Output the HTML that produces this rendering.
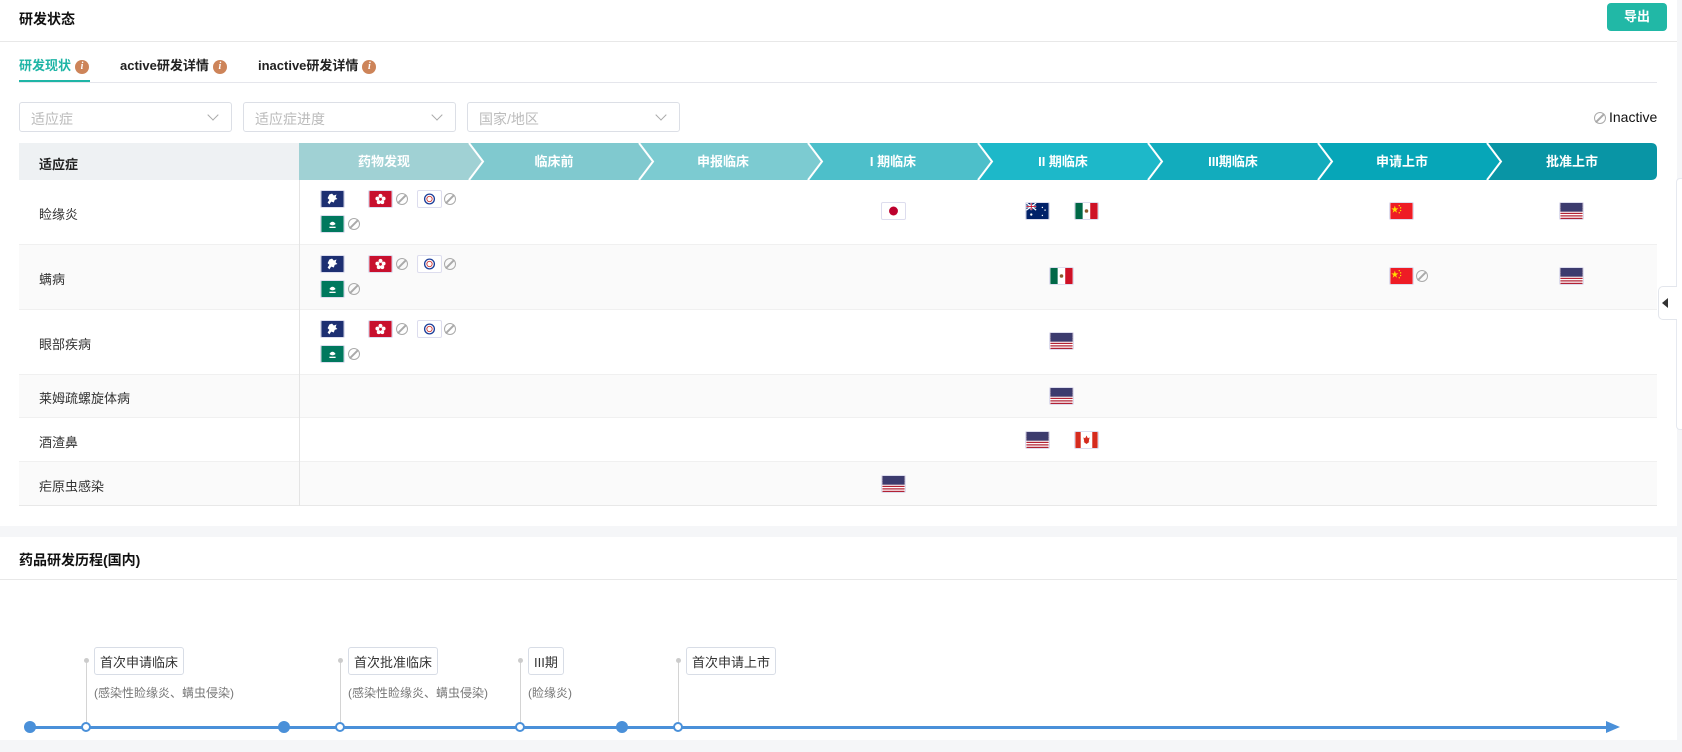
<!DOCTYPE html>
<html><head><meta charset="utf-8"><style>
*{margin:0;padding:0;box-sizing:border-box}
body{width:1682px;height:752px;overflow:hidden;background:#f5f6f8;font-family:"Liberation Sans","Noto Sans CJK SC",sans-serif;color:#222;position:relative}
.abs{position:absolute}
.card1{left:0;top:0;width:1677px;height:526px;background:#fff}
.card2{left:0;top:537px;width:1677px;height:203px;background:#fff}
.t{font-size:14px;font-weight:bold;color:#111}
.sel{height:30px;border:1px solid #dcdfe6;border-radius:3px;background:#fff;font-size:14px;color:#bbb;padding:6px 11px}
.sel:after{content:"";position:absolute;right:14px;top:8px;width:7px;height:7px;border-right:1px solid #aaa;border-bottom:1px solid #aaa;transform:rotate(45deg)}
.info{display:inline-block;width:14px;height:14px;border-radius:50%;background:#cd8459;color:#fff;font-size:10px;line-height:14px;text-align:center;font-weight:bold;vertical-align:1px;margin-left:4px;font-family:"Liberation Serif",serif;font-style:italic}
.row{left:19px;width:1638px;border-bottom:1px solid #f0f0f0}
.rl{font-size:13px;color:#333;left:20px}
.fl{position:absolute;width:25px;height:18px;border:1px solid #dde;border-radius:2px;overflow:hidden}
.no{position:absolute;width:12px;height:12px;border:1.5px solid #aaa;border-radius:50%}
.no:after{content:"";position:absolute;left:4px;top:-1px;width:1.5px;height:12px;background:#aaa;transform:rotate(45deg)}
.box{position:absolute;top:647px;height:28px;border:1px solid #d8dde6;border-radius:3px;background:#fff;font-size:13px;color:#333;padding:4px 5px;white-space:nowrap}
.sub{position:absolute;top:684px;font-size:12px;color:#777}
.vl{position:absolute;width:1px;background:#d4d4d4;top:660px;height:67px}
.vl:before{content:"";position:absolute;left:-2px;top:-2px;width:5px;height:5px;border-radius:50%;background:#ccc}
.fd{position:absolute;top:721px;width:12px;height:12px;border-radius:50%;background:#4a90d9}
.hd{position:absolute;top:722px;width:10px;height:10px;border-radius:50%;background:#fff;border:2px solid #4a90d9}
</style></head><body>
<div class="abs card1"></div>
<div class="abs card2"></div>
<div class="abs t" style="left:19px;top:9px">研发状态</div>
<div class="abs" style="left:1607px;top:3px;width:60px;height:28px;background:#21b8a6;border-radius:4px;color:#fff;font-size:13px;text-align:center;line-height:28px;font-weight:bold">导出</div>
<div class="abs" style="left:0;top:41px;width:1677px;height:1px;background:#e8e8e8"></div>
<div class="abs" style="left:19px;top:55px;font-size:13px;font-weight:bold;color:#1fb5a6">研发现状<span class="info">i</span></div>
<div class="abs" style="left:120px;top:55px;font-size:13px;font-weight:bold;color:#222">active研发详情<span class="info">i</span></div>
<div class="abs" style="left:258px;top:55px;font-size:13px;font-weight:bold;color:#222">inactive研发详情<span class="info">i</span></div>
<div class="abs" style="left:19px;top:80px;width:71px;height:3px;background:#1fb5a6"></div>
<div class="abs" style="left:19px;top:82px;width:1638px;height:1px;background:#e5e6ec"></div>
<div class="abs sel" style="left:19px;top:102px;width:213px">适应症</div>
<div class="abs sel" style="left:243px;top:102px;width:213px">适应症进度</div>
<div class="abs sel" style="left:467px;top:102px;width:213px">国家/地区</div>
<div class="no" style="left:1594px;top:112px"></div>
<div class="abs" style="left:1609px;top:109px;font-size:14px;color:#111">Inactive</div>

<div class="abs" style="left:19px;top:143px;width:280px;height:37px;background:#eef1f3"></div>
<div class="abs" style="left:39px;top:154px;font-size:13px;font-weight:bold;color:#222">适应症</div>
<svg class="abs" style="left:299px;top:143px" width="1358" height="37">
<g font-family="Liberation Sans,Noto Sans CJK SC,sans-serif" font-size="13" font-weight="bold" fill="#fff" text-anchor="middle">
<polygon points="0,0 170,0 184,18.5 170,37 0,37" fill="#a0d1d4"/>
<polygon points="170,0 340,0 354,18.5 340,37 170,37 184,18.5" fill="#80c9cf"/>
<polygon points="340,0 509,0 523,18.5 509,37 340,37 354,18.5" fill="#7ccbd1"/>
<polygon points="509,0 679,0 693,18.5 679,37 509,37 523,18.5" fill="#4dbfca"/>
<polygon points="679,0 849,0 863,18.5 849,37 679,37 693,18.5" fill="#1db8c9"/>
<polygon points="849,0 1019,0 1033,18.5 1019,37 849,37 863,18.5" fill="#12acbd"/>
<polygon points="1019,0 1188,0 1202,18.5 1188,37 1019,37 1033,18.5" fill="#06a6b8"/>
<path d="M1188,0 H1352 Q1358,0 1358,6 V31 Q1358,37 1352,37 H1188 L1202,18.5Z" fill="#0995a5"/>
<polyline points="170,0 184,18.5 170,37" fill="none" stroke="#fff" stroke-width="2"/>
<polyline points="340,0 354,18.5 340,37" fill="none" stroke="#fff" stroke-width="2"/>
<polyline points="509,0 523,18.5 509,37" fill="none" stroke="#fff" stroke-width="2"/>
<polyline points="679,0 693,18.5 679,37" fill="none" stroke="#fff" stroke-width="2"/>
<polyline points="849,0 863,18.5 849,37" fill="none" stroke="#fff" stroke-width="2"/>
<polyline points="1019,0 1033,18.5 1019,37" fill="none" stroke="#fff" stroke-width="2"/>
<polyline points="1188,0 1202,18.5 1188,37" fill="none" stroke="#fff" stroke-width="2"/>
<text x="85" y="23">药物发现</text><text x="255" y="23">临床前</text><text x="424" y="23">申报临床</text><text x="594" y="23">I 期临床</text><text x="764" y="23">II 期临床</text><text x="934" y="23">III期临床</text><text x="1103" y="23">申请上市</text><text x="1273" y="23">批准上市</text>
</g></svg>

<div class="abs row" style="top:180px;height:65px"></div>
<div class="abs row" style="top:245px;height:65px;background:#fafafa"></div>
<div class="abs row" style="top:310px;height:65px"></div>
<div class="abs row" style="top:375px;height:43px;background:#fafafa"></div>
<div class="abs row" style="top:418px;height:44px"></div>
<div class="abs row" style="top:462px;height:44px;background:#fafafa;border-bottom:1px solid #e8e8e8"></div>
<div class="abs" style="left:299px;top:180px;width:1px;height:326px;background:#e4e4e4"></div>
<div class="abs rl" style="left:39px;top:204px">睑缘炎</div>
<div class="abs rl" style="left:39px;top:269px">螨病</div>
<div class="abs rl" style="left:39px;top:334px">眼部疾病</div>
<div class="abs rl" style="left:39px;top:388px">莱姆疏螺旋体病</div>
<div class="abs rl" style="left:39px;top:432px">酒渣鼻</div>
<div class="abs rl" style="left:39px;top:476px">疟原虫感染</div>

<svg width="0" height="0" style="position:absolute"><defs>
<symbol id="eu" viewBox="0 0 25 18"><rect width="25" height="18" fill="#1d2f72"/><path d="M9 4l3-1 2 2 3-1-1 3 2 2-3 1-1 3-3-1-2 3-2-2 2-3-2-2z" fill="#fff"/></symbol>
<symbol id="hk" viewBox="0 0 25 18"><rect width="25" height="18" fill="#c8102e"/><g fill="#fff"><circle cx="12.5" cy="5.5" r="2.2"/><circle cx="16" cy="8.5" r="2.2"/><circle cx="14.5" cy="12.5" r="2.2"/><circle cx="10.5" cy="12.5" r="2.2"/><circle cx="9" cy="8.5" r="2.2"/></g></symbol>
<symbol id="tw" viewBox="0 0 25 18"><rect width="25" height="18" fill="#fff"/><circle cx="12.5" cy="9" r="5.5" fill="none" stroke="#1d3f9a" stroke-width="1.5"/><circle cx="12.5" cy="9" r="3" fill="none" stroke="#c33" stroke-width="1"/></symbol>
<symbol id="mo" viewBox="0 0 25 18"><rect width="25" height="18" fill="#00785e"/><path d="M9 9 Q12.5 4 16 9 Q12.5 12 9 9z" fill="#fff"/><rect x="9" y="12" width="7" height="1.5" fill="#fff"/></symbol>
<symbol id="jp" viewBox="0 0 25 18"><rect width="25" height="18" fill="#fff"/><circle cx="12.5" cy="9" r="5" fill="#bc002d"/></symbol>
<symbol id="au" viewBox="0 0 25 18"><rect width="25" height="18" fill="#012169"/><path d="M0 0L11 8M11 0L0 8" stroke="#fff" stroke-width="1.5"/><path d="M5.5 0V8M0 4H11" stroke="#fff" stroke-width="2"/><path d="M5.5 0V8M0 4H11" stroke="#c8102e" stroke-width="1"/><g fill="#fff"><circle cx="5.5" cy="13" r="1.3"/><circle cx="18" cy="5" r=".8"/><circle cx="21" cy="8" r=".8"/><circle cx="18" cy="14" r=".8"/></g></symbol>
<symbol id="mx" viewBox="0 0 25 18"><rect width="8.3" height="18" fill="#006847"/><rect x="8.3" width="8.4" height="18" fill="#fff"/><rect x="16.7" width="8.3" height="18" fill="#ce1126"/><circle cx="12.5" cy="9" r="2" fill="#8b5a2b"/></symbol>
<symbol id="cn" viewBox="0 0 25 18"><rect width="25" height="18" fill="#ee1c25"/><polygon points="5,3 6,6 9,6 6.5,8 7.5,11 5,9 2.5,11 3.5,8 1,6 4,6" fill="#ffde00"/><g fill="#ffde00"><circle cx="10" cy="3" r=".8"/><circle cx="11.5" cy="5.5" r=".8"/><circle cx="11.5" cy="8.5" r=".8"/><circle cx="10" cy="11" r=".8"/></g></symbol>
<symbol id="us" viewBox="0 0 25 18"><rect width="25" height="18" fill="#fff"/><g fill="#b22234"><rect y="0" width="25" height="1.4"/><rect y="2.8" width="25" height="1.4"/><rect y="5.5" width="25" height="1.4"/><rect y="8.3" width="25" height="1.4"/><rect y="11" width="25" height="1.4"/><rect y="13.8" width="25" height="1.4"/><rect y="16.6" width="25" height="1.4"/></g><rect width="25" height="9.7" fill="#3c3b6e"/></symbol>
<symbol id="ca" viewBox="0 0 25 18"><rect width="25" height="18" fill="#fff"/><rect width="6" height="18" fill="#d52b1e"/><rect x="19" width="6" height="18" fill="#d52b1e"/><path d="M12.5 4l1.5 3 2-1-1 5 1 0-3.5 2.5-3.5-2.5 1 0-1-5 2 1z" fill="#d52b1e"/></symbol>
</defs></svg>

<svg class="fl" style="left:320px;top:190px"><use href="#eu"/></svg>
<svg class="fl" style="left:368px;top:190px"><use href="#hk"/></svg><div class="no" style="left:396px;top:193px"></div>
<svg class="fl" style="left:417px;top:190px"><use href="#tw"/></svg><div class="no" style="left:444px;top:193px"></div>
<svg class="fl" style="left:320px;top:215px"><use href="#mo"/></svg><div class="no" style="left:348px;top:218px"></div>
<svg class="fl" style="left:881px;top:202px"><use href="#jp"/></svg>
<svg class="fl" style="left:1025px;top:202px"><use href="#au"/></svg>
<svg class="fl" style="left:1074px;top:202px"><use href="#mx"/></svg>
<svg class="fl" style="left:1389px;top:202px"><use href="#cn"/></svg>
<svg class="fl" style="left:1559px;top:202px"><use href="#us"/></svg>
<svg class="fl" style="left:320px;top:255px"><use href="#eu"/></svg>
<svg class="fl" style="left:368px;top:255px"><use href="#hk"/></svg><div class="no" style="left:396px;top:258px"></div>
<svg class="fl" style="left:417px;top:255px"><use href="#tw"/></svg><div class="no" style="left:444px;top:258px"></div>
<svg class="fl" style="left:320px;top:280px"><use href="#mo"/></svg><div class="no" style="left:348px;top:283px"></div>
<svg class="fl" style="left:1049px;top:267px"><use href="#mx"/></svg>
<svg class="fl" style="left:1389px;top:267px"><use href="#cn"/></svg><div class="no" style="left:1416px;top:270px"></div>
<svg class="fl" style="left:1559px;top:267px"><use href="#us"/></svg>
<svg class="fl" style="left:320px;top:320px"><use href="#eu"/></svg>
<svg class="fl" style="left:368px;top:320px"><use href="#hk"/></svg><div class="no" style="left:396px;top:323px"></div>
<svg class="fl" style="left:417px;top:320px"><use href="#tw"/></svg><div class="no" style="left:444px;top:323px"></div>
<svg class="fl" style="left:320px;top:345px"><use href="#mo"/></svg><div class="no" style="left:348px;top:348px"></div>
<svg class="fl" style="left:1049px;top:332px"><use href="#us"/></svg>
<svg class="fl" style="left:1049px;top:387px"><use href="#us"/></svg>
<svg class="fl" style="left:1025px;top:431px"><use href="#us"/></svg>
<svg class="fl" style="left:1074px;top:431px"><use href="#ca"/></svg>
<svg class="fl" style="left:881px;top:475px"><use href="#us"/></svg>

<div class="abs" style="left:1676px;top:178px;width:6px;height:252px;background:#fff;border:1px solid #e6e9f0;border-right:none;border-radius:4px 0 0 4px"></div>
<div class="abs" style="left:1658px;top:286px;width:19px;height:34px;background:#fff;border:1px solid #e3e6ec;border-right:none;border-radius:5px 0 0 5px"></div>
<div class="abs" style="left:1662px;top:298px;width:0;height:0;border-top:5px solid transparent;border-bottom:5px solid transparent;border-right:6px solid #333"></div>

<div class="abs t" style="left:19px;top:550px">药品研发历程(国内)</div>
<div class="abs" style="left:0;top:579px;width:1677px;height:1px;background:#e8e8e8"></div>
<div class="abs" style="left:30px;top:726px;width:1580px;height:3px;background:#4a90d9"></div>
<div class="abs" style="left:1606px;top:721px;width:0;height:0;border-top:6px solid transparent;border-bottom:6px solid transparent;border-left:14px solid #4a90d9"></div>
<div class="vl" style="left:86px"></div><div class="vl" style="left:340px"></div><div class="vl" style="left:520px"></div><div class="vl" style="left:678px"></div>
<div class="fd" style="left:24px"></div><div class="fd" style="left:278px"></div><div class="fd" style="left:616px"></div>
<div class="hd" style="left:81px"></div><div class="hd" style="left:335px"></div><div class="hd" style="left:515px"></div><div class="hd" style="left:673px"></div>
<div class="box" style="left:94px">首次申请临床</div>
<div class="box" style="left:348px">首次批准临床</div>
<div class="box" style="left:528px">III期</div>
<div class="box" style="left:686px">首次申请上市</div>
<div class="sub" style="left:94px">(感染性睑缘炎、螨虫侵染)</div>
<div class="sub" style="left:348px">(感染性睑缘炎、螨虫侵染)</div>
<div class="sub" style="left:528px">(睑缘炎)</div>
</body></html>
